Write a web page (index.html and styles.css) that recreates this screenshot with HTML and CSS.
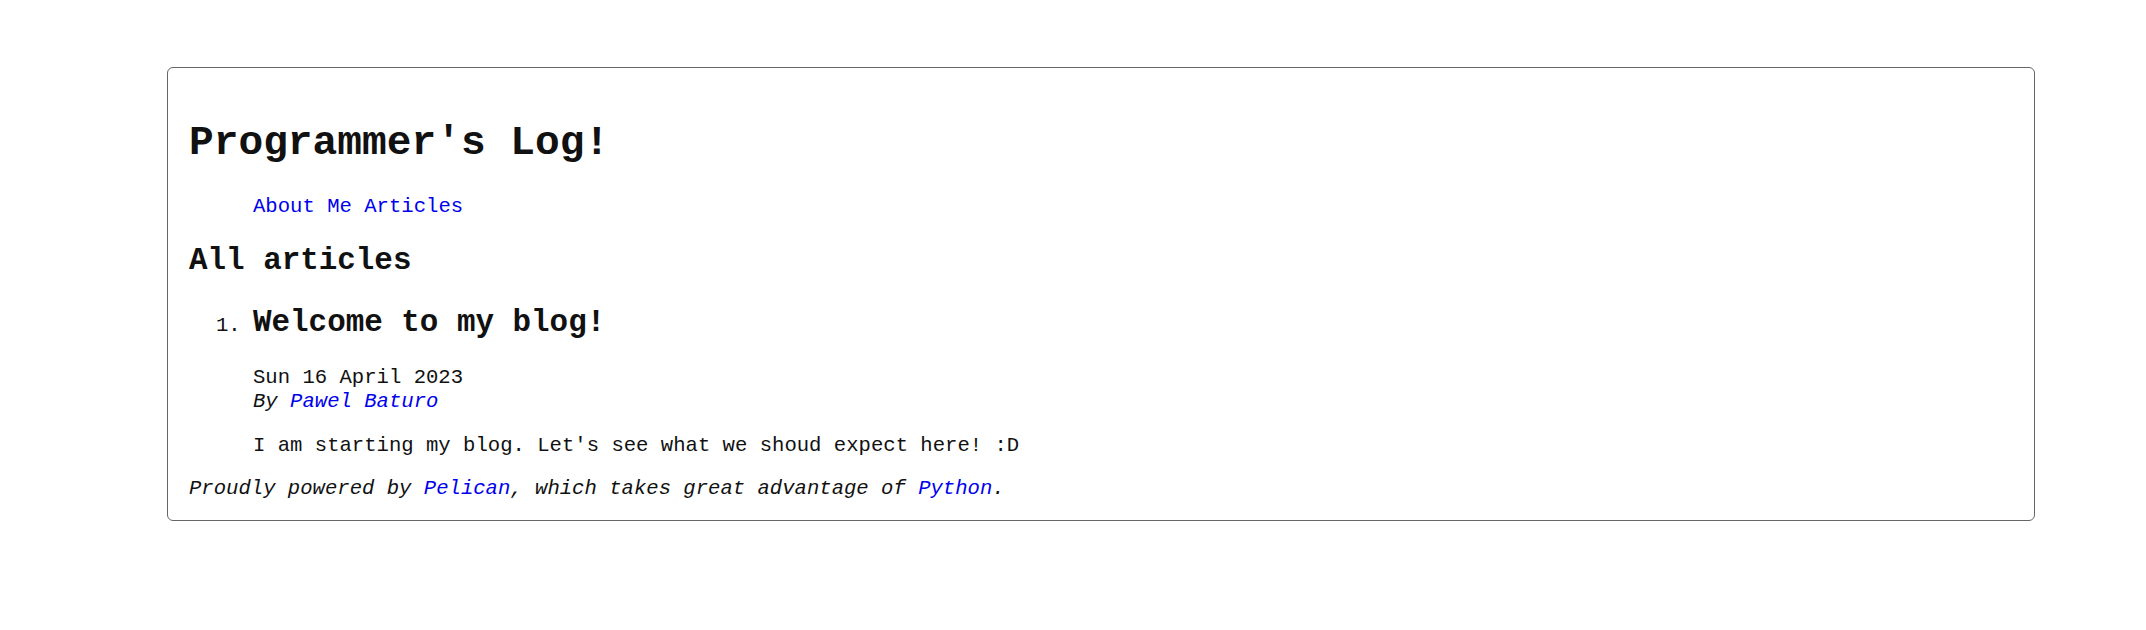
FILE: index.html
```html
<!DOCTYPE html>
<html lang="en">
<head>
<meta charset="utf-8">
<title>Programmer's Log!</title>
<link rel="stylesheet" href="styles.css">
</head>
<body>
<div class="page">
  <div class="box">
    <header class="site-header">
      <h1 class="site-title">Programmer's Log!</h1>
    </header>
    <nav class="menu">
      <ul class="menu-list">
        <li class="menu-item"><a class="link" href="#">About Me</a></li>
        <li class="menu-item"><a class="link" href="#">Articles</a></li>
      </ul>
    </nav>
    <section class="content">
      <h2 class="section-title">All articles</h2>
      <ol class="post-list">
        <li class="post">
          <article>
            <h2 class="post-title">Welcome to my blog!</h2>
            <div class="post-info">
              <time class="post-date">Sun 16 April 2023</time>
              <address class="post-author">By <a class="link" href="#">Pawel Baturo</a></address>
            </div>
            <p class="post-body">I am starting my blog. Let's see what we shoud expect here! :D</p>
          </article>
        </li>
      </ol>
    </section>
    <footer class="site-footer">
      <address class="powered">Proudly powered by <a class="link" href="#">Pelican</a>, which takes great advantage of <a class="link" href="#">Python</a>.</address>
    </footer>
  </div>
</div>
</body>
</html>
```

FILE: styles.css
```css
html, body {
  margin: 0;
  padding: 0;
  background: #ffffff;
}

.page {
  padding-top: 67px;
  font-family: "Liberation Mono", "Courier New", monospace;
  font-size: 20.6px;
  line-height: 23.6px;
  color: #111111;
}

.box {
  margin: 0 111px 0 167px;
  border: 1px solid #666666;
  border-radius: 6px;
  padding: 24px 21px 19px 21px;
}

.site-title {
  font-size: 41.2px;
  line-height: 47px;
  font-weight: bold;
  margin: 28px 0 0 0;
}

.menu-list {
  list-style: none;
  margin: 28px 0 0 0;
  padding-left: 64px;
  display: flex;
  gap: 12.4px;
}

.menu-item {
  margin: 0;
}

.link {
  color: #0000ee;
  text-decoration: none;
}

.section-title {
  font-size: 30.9px;
  line-height: 35.4px;
  font-weight: bold;
  margin: 24.5px 0 0 0;
}

.post-list {
  margin: 0;
  padding-left: 64px;
}

.post-title {
  font-size: 30.9px;
  line-height: 35.4px;
  font-weight: bold;
  margin: 26px 0 0 0;
}

.post-info {
  margin-top: 26px;
}

.post-date {
  display: block;
}

.post-author {
  display: block;
  font-style: italic;
}

.post-body {
  margin: 21px 0 0 0;
}

.site-footer {
  margin-top: 19.5px;
}

.powered {
  font-style: italic;
}
```
